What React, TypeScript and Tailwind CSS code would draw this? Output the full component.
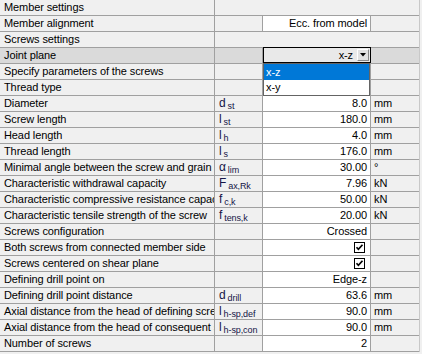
type Row = {
  label: string
  cat?: boolean
  sym?: string
  sub?: string
  value?: string
  unit?: string
  check?: boolean
  combo?: boolean
  selected?: boolean
}

const rows: Row[] = [
  { label: 'Member settings', cat: true },
  { label: 'Member alignment', value: 'Ecc. from model' },
  { label: 'Screws settings', cat: true },
  { label: 'Joint plane', combo: true, selected: true },
  { label: 'Specify parameters of the screws', value: '' },
  { label: 'Thread type', value: '' },
  { label: 'Diameter', sym: 'd', sub: 'st', value: '8.0', unit: 'mm' },
  { label: 'Screw length', sym: 'l', sub: 'st', value: '180.0', unit: 'mm' },
  { label: 'Head length', sym: 'l', sub: 'h', value: '4.0', unit: 'mm' },
  { label: 'Thread length', sym: 'l', sub: 's', value: '176.0', unit: 'mm' },
  { label: 'Minimal angle between the screw and grain', sym: 'α', sub: 'lim', value: '30.00', unit: '°' },
  { label: 'Characteristic withdrawal capacity', sym: 'F', sub: 'ax,Rk', value: '7.96', unit: 'kN' },
  { label: 'Characteristic compressive resistance capacity', sym: 'f', sub: 'c,k', value: '50.00', unit: 'kN' },
  { label: 'Characteristic tensile strength of the screw', sym: 'f', sub: 'tens,k', value: '20.00', unit: 'kN' },
  { label: 'Screws configuration', value: 'Crossed' },
  { label: 'Both screws from connected member side', check: true },
  { label: 'Screws centered on shear plane', check: true },
  { label: 'Defining drill point on', value: 'Edge-z' },
  { label: 'Defining drill point distance', sym: 'd', sub: 'drill', value: '63.6', unit: 'mm' },
  { label: 'Axial distance from the head of defining screw', sym: 'l', sub: 'h-sp,def', value: '90.0', unit: 'mm' },
  { label: 'Axial distance from the head of consequent screw', sym: 'l', sub: 'h-sp,con', value: '90.0', unit: 'mm' },
  { label: 'Number of screws', value: '2' },
]

function CheckBox() {
  return (
    <svg width="11" height="11" viewBox="0 0 11 11" className="block">
      <rect x="0.5" y="0.5" width="10" height="10" fill="#fff" stroke="#000" />
      <path d="M2.5 5.2 L4.4 7.3 L8.5 2.8" fill="none" stroke="#000" strokeWidth="1.7" />
    </svg>
  )
}

function Combo() {
  return (
    <>
      <div className="absolute left-0 -right-px -top-px bottom-0 z-10 flex items-center justify-end border border-black bg-[#e9e9e9]">
        <span className="pr-[4px]">x-z</span>
        <div className="mr-px flex h-[12px] w-[12px] items-center justify-center border border-t-white border-l-white border-r-[#888] border-b-[#888] bg-[#e1e1e1]">
          <svg width="6" height="4" viewBox="0 0 6 4">
            <path d="M0 0 H6 L3 3.5 Z" fill="#000" />
          </svg>
        </div>
      </div>
      <div className="absolute left-0 top-[15px] z-20 w-[107px] border border-[#646464] bg-white">
        <div className="h-[16px] bg-[#0078d7] pl-[2px] leading-[16px] text-white">x-z</div>
        <div className="h-[15px] pl-[2px] leading-[15px] text-black">x-y</div>
      </div>
    </>
  )
}

export default function App() {
  return (
    <div className="h-[354px] w-[422px] overflow-hidden bg-[#f0f0f0] font-['Liberation_Sans',Arial,sans-serif] text-[11px] tracking-[-0.1px] text-black">
      <div className="w-[420px] border-r border-[#c8c8c8]">
        {rows.map((r, i) => {
          const bg = r.selected ? 'bg-[#dadada]' : 'bg-[#f0f0f0]'
          const label = (
            <div className={`h-[16px] w-[215px] shrink-0 overflow-hidden whitespace-nowrap border-r border-b border-[#a0a0a0] pl-[4px] leading-[15px] ${bg}`}>
              {r.label}
            </div>
          )
          if (r.cat) {
            return (
              <div key={i} className="flex">
                {label}
                <div className="h-[16px] flex-1 border-b border-[#a0a0a0] bg-[#f0f0f0]" />
              </div>
            )
          }
          return (
            <div key={i} className="flex">
              {label}
              <div className={`h-[16px] w-[48px] shrink-0 whitespace-nowrap border-r border-b border-[#a0a0a0] pl-[4px] leading-[15px] text-[#141446] ${bg}`}>
                {r.sym && (
                  <>
                    <span className="text-[12px]">{r.sym}</span>
                    <span className="relative top-[2px] ml-[2px] text-[9px]">{r.sub}</span>
                  </>
                )}
              </div>
              <div className="relative flex h-[16px] w-[108px] shrink-0 items-center justify-end border-r border-b border-[#a0a0a0] bg-white pr-[3px] leading-[15px]">
                {r.combo ? <Combo /> : r.check ? <div className="pr-[2px]"><CheckBox /></div> : r.value}
              </div>
              <div className={`h-[16px] flex-1 border-b border-[#a0a0a0] pl-[3px] leading-[15px] ${bg}`}>
                {r.unit}
              </div>
            </div>
          )
        })}
      </div>
    </div>
  )
}
